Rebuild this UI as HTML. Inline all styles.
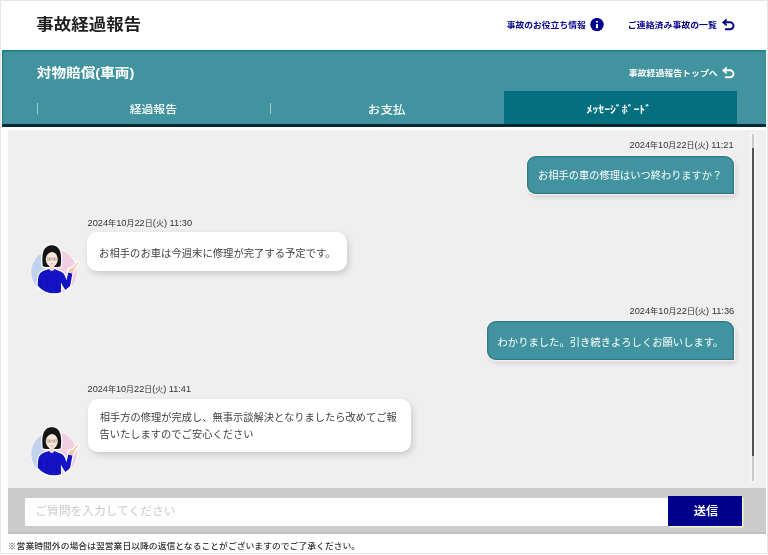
<!DOCTYPE html><html lang="ja"><head><meta charset="utf-8"><title>事故経過報告</title><style>
html,body{margin:0;padding:0}
body{width:768px;height:555px;position:relative;overflow:hidden;background:#fff;font-family:"Liberation Sans","Noto Sans CJK JP",sans-serif}
.frame{position:absolute;left:0;top:0;width:765.6px;height:552.3px;border:1.2px solid #e6e6e6;border-bottom-width:1.5px;pointer-events:none}
.t{position:absolute;overflow:hidden;white-space:nowrap;line-height:1}
.t svg{position:absolute;left:0;top:0;display:block;filter:blur(.4px)}
.t svg text{font-family:"Liberation Sans","Noto Sans CJK JP",sans-serif}
.ic{position:absolute;display:block}
.hdr,.sub,.chat,.bar{position:absolute;left:0;top:0;width:0;height:0}
.sub:before{content:"";position:absolute;left:1.7px;top:50.3px;width:764.3px;height:74px;background:#41949f;box-shadow:inset 0 1.6px 1.4px #1c7a8a,inset 1px 0 1px #1c7a8a}
.sub:after{content:"";position:absolute;left:2px;top:124.2px;width:764px;height:3px;background:linear-gradient(#07303b,#03212b 55%,#0c3641)}
.tabon{position:absolute;left:503.6px;top:91.2px;width:233.2px;height:33px;background:#04707f}
.sep{position:absolute;top:103.3px;width:1px;height:11px;background:#a4cbd0}
.chat:before{content:"";position:absolute;left:8px;top:129.8px;width:758px;height:358.2px;background:#efefef}
.bub{position:absolute;box-sizing:border-box}
.bub.me{background:#41949f;border-radius:9px 9px 0 9px;box-shadow:inset 0 0 0 1.3px rgba(0,85,100,.38),0 0 0 1.4px rgba(255,240,234,.85),2px 3px 5px rgba(0,0,0,.15)}
.bub.op{background:#fff;border-radius:10px;box-shadow:2px 3px 6px rgba(0,0,0,.15)}
.sbt{position:absolute;left:751.6px;top:133.5px;width:2.8px;height:347.5px;background:#c9c9c9;box-shadow:0 0 0 1.8px rgba(255,255,255,.45)}
.sbh{position:absolute;left:751.6px;top:148px;width:2.8px;height:308px;background:#555}
.bar:before{content:"";position:absolute;left:8px;top:488px;width:758px;height:46px;background:linear-gradient(#cbcbcb 44px,#bfbfbf 44px)}
.inp{position:absolute;left:24.8px;top:497.8px;width:644px;height:28.3px;background:#fff}
.btn{position:absolute;left:668.4px;top:495.8px;width:73.8px;height:30.2px;background:#00008b;box-shadow:1.5px 1.5px 0 #f6f1cf}
.av{position:absolute;width:54px;height:56px}
.av svg{display:block;filter:blur(.35px)}
</style></head><body><div class="frame"></div><div class="hdr"><div class="t " style="left:34.00px;top:13.86px;width:109.30px;height:20.79px;font-size:15.9px"><svg width="109.30" height="20.79" viewBox="0 0 109.30 20.79" fill="#1f1f1f"><text x="2.34" y="16.44" font-size="15.9" font-weight="bold" textLength="104.94" lengthAdjust="spacingAndGlyphs">事故経過報告</text></svg></div><a class="lnk"><div class="t " style="left:503.60px;top:17.82px;width:84.60px;height:13.50px;font-size:8.1px"><svg width="84.60" height="13.50" viewBox="0 0 84.60 13.50" fill="#00008b"><text x="2.67" y="9.81" font-size="8.06" font-weight="bold" textLength="79.1" lengthAdjust="spacingAndGlyphs">事故のお役立ち情報</text></svg></div><svg class="ic" style="left:590px;top:18px" width="14" height="14" viewBox="0 0 14 14"><circle cx="7" cy="6.6" r="6.7" fill="#00008b"/><circle cx="7" cy="3.7" r="1" fill="#fff"/><rect x="5.95" y="6.1" width="2.1" height="4.2" fill="#fff"/></svg></a><a class="lnk"><div class="t " style="left:626.10px;top:17.77px;width:93.70px;height:13.60px;font-size:8.2px"><svg width="93.70" height="13.60" viewBox="0 0 93.70 13.60" fill="#00008b"><text x="1.85" y="9.91" font-size="8.18" font-weight="bold" textLength="89.1" lengthAdjust="spacingAndGlyphs">ご連絡済み事故の一覧</text></svg></div><svg class="ic" style="left:721.0px;top:17.0px" width="15" height="14" viewBox="0 0 15 14"><path d="M1 5.4L5.5 1.5L5.9 3.3L4.4 5.4L5.9 7.5L5.5 9.3Z" fill="#00008b"/><path d="M5 5.3H9A3.5 3.5 0 0 1 9 12.3H4.8" fill="none" stroke="#00008b" stroke-width="1.9" stroke-linecap="round"/></svg></a></div><div class="sub"><div class="t " style="left:34.00px;top:62.73px;width:102.60px;height:18.05px;font-size:13.0px"><svg width="102.60" height="18.05" viewBox="0 0 102.60 18.05" fill="#fff"><text x="2.74" y="13.95" font-size="12.96" font-weight="bold" textLength="97.6" lengthAdjust="spacingAndGlyphs">対物賠償(車両)</text></svg></div><div class="t " style="left:625.50px;top:65.70px;width:94.50px;height:13.61px;font-size:8.2px"><svg width="94.50" height="13.61" viewBox="0 0 94.50 13.61" fill="#fff"><text x="2.66" y="9.91" font-size="8.18" font-weight="bold" textLength="89.1" lengthAdjust="spacingAndGlyphs">事故経過報告トップへ</text></svg></div><svg class="ic" style="left:721.0px;top:64.8px" width="15" height="14" viewBox="0 0 15 14"><path d="M1 5.4L5.5 1.5L5.9 3.3L4.4 5.4L5.9 7.5L5.5 9.3Z" fill="#fff"/><path d="M5 5.3H9A3.5 3.5 0 0 1 9 12.3H4.8" fill="none" stroke="#fff" stroke-width="1.9" stroke-linecap="round"/></svg><div class="sep" style="left:37px"></div><div class="sep" style="left:270px"></div><div class="tabon"></div><div class="t " style="left:127.15px;top:100.95px;width:52.30px;height:15.89px;font-size:10.6px"><svg width="52.30" height="15.89" viewBox="0 0 52.30 15.89" fill="#fff"><text x="2.75" y="11.99" font-size="10.64" font-weight="500" textLength="47.24" lengthAdjust="spacingAndGlyphs">経過報告</text></svg></div><div class="t " style="left:366.05px;top:100.62px;width:42.30px;height:16.56px;font-size:11.4px"><svg width="42.30" height="16.56" viewBox="0 0 42.30 16.56" fill="#fff"><text x="1.82" y="12.59" font-size="11.35" font-weight="500" textLength="37.8" lengthAdjust="spacingAndGlyphs">お支払</text></svg></div><div class="t " style="left:584.30px;top:101.22px;width:69.50px;height:15.77px;font-size:10.6px"><svg width="69.50" height="15.77" viewBox="0 0 69.50 15.77" fill="#fff"><text x="2.60" y="12.09" font-size="10.58" font-weight="bold" textLength="64.4" lengthAdjust="spacingAndGlyphs">ﾒｯｾｰｼﾞﾎﾞｰﾄﾞ</text></svg></div></div><div class="chat"><div class="sbt"></div><div class="sbh"></div><div class="t " style="left:627.25px;top:138.36px;width:109.90px;height:14.67px;font-size:8.0px"><svg width="109.90" height="14.67" viewBox="0 0 109.90 14.67" fill="#333"><text x="2.54" y="9.76" font-size="9.22">2024<tspan font-size="8.01">年</tspan>10<tspan font-size="8.01">月</tspan>22<tspan font-size="8.01">日</tspan>(<tspan font-size="8.01">火</tspan>) 11:21</text></svg></div><div class="bub me" style="left:527.2px;top:155.6px;width:207.2px;height:38.4px"></div><div class="t " style="left:536.20px;top:166.88px;width:187.00px;height:15.54px;font-size:10.3px"><svg width="187.00" height="15.54" viewBox="0 0 187.00 15.54" fill="#fff"><text x="2.04" y="11.66" font-size="10.25">お相手の車の修理はいつ終わりますか？</text></svg></div><div class="t " style="left:84.80px;top:215.95px;width:110.40px;height:14.71px;font-size:8.0px"><svg width="110.40" height="14.71" viewBox="0 0 110.40 14.71" fill="#333"><text x="2.53" y="9.79" font-size="9.26">2024<tspan font-size="8.04">年</tspan>10<tspan font-size="8.04">月</tspan>22<tspan font-size="8.04">日</tspan>(<tspan font-size="8.04">火</tspan>) 11:30</text></svg></div><div class="bub op" style="left:87.3px;top:232.2px;width:259.8px;height:39.3px"></div><div class="t " style="left:96.90px;top:244.56px;width:235.00px;height:15.38px;font-size:10.1px"><svg width="235.00" height="15.38" viewBox="0 0 235.00 15.38" fill="#404040"><text x="2.03" y="11.52" font-size="10.09" textLength="236.7" lengthAdjust="spacingAndGlyphs">お相手のお車は今週末に修理が完了する予定です。</text></svg></div><div class="av" style="left:28px;top:242px"><svg width="54" height="56" viewBox="0 0 54 56"><defs><linearGradient id="avgbg" x1="0" x2="1" y1="0" y2="0"><stop offset="0.3" stop-color="#c1d2f1"/><stop offset="0.62" stop-color="#f1cfe2"/></linearGradient><clipPath id="avgcp"><path d="M0 0H54V30H47.3A21.3 21.3 0 0 1 4.7 30H0Z"/></clipPath><clipPath id="avgcq"><path d="M0 0H54V30H48.7A22.7 22.7 0 0 1 3.3 30H0Z"/></clipPath><path id="avgp1" d="M14.8 24.2C13.4 14 14.4 3.3 23.8 3.3C33.2 3.3 34 14 32.6 24.2C30.5 25.4 17 25.4 14.8 24.2Z"/><path id="avgp2" d="M21.4 22H26.2V29.5H21.4Z"/><path id="avgp3" d="M21.2 27C16.5 28 12.4 29.6 10.8 33.6C9.4 37.5 9.6 46 10.2 56H33.2V41.5L37 47.6C38.6 49.6 41.4 48.6 41.7 46.4L44.4 31.6L40.3 30.4L38.4 38.6C37.6 34.6 36.4 31.2 33.2 29.8C30.5 28.6 28 27.6 26.4 27C25.4 29.6 22.2 29.6 21.2 27Z"/><path id="avgp4" d="M40.5 30.5C40 28.6 40.8 26.8 42.6 26.2C43.6 25.8 44.6 25.6 45.4 25L49.3 20.4C50 19.8 50.8 20.5 50.3 21.3L46.6 26.4C46.2 28.6 45.4 30.6 44.3 31.6Z"/><g id="avgo"><use href="#avgp1"/><use href="#avgp2"/><use href="#avgp3"/><use href="#avgp4"/></g></defs><circle cx="26" cy="30" r="23.7" fill="#f8f4f4"/><circle cx="26" cy="30" r="22.8" fill="url(#avgbg)"/><g clip-path="url(#avgcq)"><use href="#avgo" fill="#fff" stroke="#fff" stroke-width="2.4" stroke-linejoin="round"/></g><g clip-path="url(#avgcp)"><use href="#avgp1" fill="#161616"/><use href="#avgp2" fill="#f1d8c6"/><use href="#avgp3" fill="#1414c6"/><use href="#avgp4" fill="#f0c9ae"/><ellipse cx="23.8" cy="17.3" rx="6" ry="7.4" fill="#f7e6d8"/><path d="M17.6 14.6C17.4 8.8 20.6 6.4 24 6.4C27.6 6.4 30.2 9 30 15.4C29.2 12.6 27.8 10.6 26 9.6C23.8 9 20 11 17.6 14.6Z" fill="#161616"/><path d="M19.3 15.8h3.6v2.5h-3.6zM24.7 15.8h3.6v2.5h-3.6zM22.9 16.8h1.8" fill="none" stroke="#6a5a50" stroke-width=".35" opacity=".8"/><circle cx="21.2" cy="17" r=".55" fill="#2a2020"/><circle cx="26.4" cy="17" r=".55" fill="#2a2020"/><path d="M22.8 21.6Q23.8 22.5 24.9 21.6" stroke="#c46a6a" stroke-width=".8" fill="none"/><path d="M33.4 41.5L33.7 52" stroke="#fff" stroke-width=".9"/><path d="M18.5 35C20 41 19 47 17.5 52M27.5 33C29 38 28 44 28.5 51M12 38C13 42 12.5 46 12.5 49" stroke="#0a0a9c" stroke-width=".9" fill="none" opacity=".55"/></g></svg>
</div><div class="t " style="left:627.25px;top:304.44px;width:110.60px;height:14.73px;font-size:8.1px"><svg width="110.60" height="14.73" viewBox="0 0 110.60 14.73" fill="#333"><text x="2.53" y="9.81" font-size="9.28">2024<tspan font-size="8.06">年</tspan>10<tspan font-size="8.06">月</tspan>22<tspan font-size="8.06">日</tspan>(<tspan font-size="8.06">火</tspan>) 11:36</text></svg></div><div class="bub me" style="left:486.7px;top:321.4px;width:247.6px;height:38.8px"></div><div class="t " style="left:494.80px;top:333.74px;width:226.10px;height:15.62px;font-size:10.3px"><svg width="226.10" height="15.62" viewBox="0 0 226.10 15.62" fill="#fff"><text x="2.49" y="11.73" font-size="10.33">わかりました。引き続きよろしくお願いします。</text></svg></div><div class="t " style="left:84.80px;top:381.99px;width:109.40px;height:14.63px;font-size:8.0px"><svg width="109.40" height="14.63" viewBox="0 0 109.40 14.63" fill="#333"><text x="2.54" y="9.73" font-size="9.18">2024<tspan font-size="7.97">年</tspan>10<tspan font-size="7.97">月</tspan>22<tspan font-size="7.97">日</tspan>(<tspan font-size="7.97">火</tspan>) 11:41</text></svg></div><div class="bub op" style="left:87.8px;top:398.8px;width:323.2px;height:53.6px"></div><div class="t " style="left:97.00px;top:410.13px;width:302.40px;height:15.33px;font-size:10.0px"><svg width="302.40" height="15.33" viewBox="0 0 302.40 15.33" fill="#404040"><text x="2.74" y="11.48" font-size="10.04" textLength="296.96" lengthAdjust="spacingAndGlyphs">相手方の修理が完成し、無事示談解決となりましたら改めてご報</text></svg></div><div class="t " style="left:97.30px;top:426.37px;width:158.80px;height:15.37px;font-size:10.1px"><svg width="158.80" height="15.37" viewBox="0 0 158.80 15.37" fill="#404040"><text x="2.38" y="11.51" font-size="10.07" textLength="154.2" lengthAdjust="spacingAndGlyphs">告いたしますのでご安心ください</text></svg></div><div class="av" style="left:28px;top:423.5px"><svg width="54" height="56" viewBox="0 0 54 56"><defs><linearGradient id="avhbg" x1="0" x2="1" y1="0" y2="0"><stop offset="0.3" stop-color="#c1d2f1"/><stop offset="0.62" stop-color="#f1cfe2"/></linearGradient><clipPath id="avhcp"><path d="M0 0H54V30H47.3A21.3 21.3 0 0 1 4.7 30H0Z"/></clipPath><clipPath id="avhcq"><path d="M0 0H54V30H48.7A22.7 22.7 0 0 1 3.3 30H0Z"/></clipPath><path id="avhp1" d="M14.8 24.2C13.4 14 14.4 3.3 23.8 3.3C33.2 3.3 34 14 32.6 24.2C30.5 25.4 17 25.4 14.8 24.2Z"/><path id="avhp2" d="M21.4 22H26.2V29.5H21.4Z"/><path id="avhp3" d="M21.2 27C16.5 28 12.4 29.6 10.8 33.6C9.4 37.5 9.6 46 10.2 56H33.2V41.5L37 47.6C38.6 49.6 41.4 48.6 41.7 46.4L44.4 31.6L40.3 30.4L38.4 38.6C37.6 34.6 36.4 31.2 33.2 29.8C30.5 28.6 28 27.6 26.4 27C25.4 29.6 22.2 29.6 21.2 27Z"/><path id="avhp4" d="M40.5 30.5C40 28.6 40.8 26.8 42.6 26.2C43.6 25.8 44.6 25.6 45.4 25L49.3 20.4C50 19.8 50.8 20.5 50.3 21.3L46.6 26.4C46.2 28.6 45.4 30.6 44.3 31.6Z"/><g id="avho"><use href="#avhp1"/><use href="#avhp2"/><use href="#avhp3"/><use href="#avhp4"/></g></defs><circle cx="26" cy="30" r="23.7" fill="#f8f4f4"/><circle cx="26" cy="30" r="22.8" fill="url(#avhbg)"/><g clip-path="url(#avhcq)"><use href="#avho" fill="#fff" stroke="#fff" stroke-width="2.4" stroke-linejoin="round"/></g><g clip-path="url(#avhcp)"><use href="#avhp1" fill="#161616"/><use href="#avhp2" fill="#f1d8c6"/><use href="#avhp3" fill="#1414c6"/><use href="#avhp4" fill="#f0c9ae"/><ellipse cx="23.8" cy="17.3" rx="6" ry="7.4" fill="#f7e6d8"/><path d="M17.6 14.6C17.4 8.8 20.6 6.4 24 6.4C27.6 6.4 30.2 9 30 15.4C29.2 12.6 27.8 10.6 26 9.6C23.8 9 20 11 17.6 14.6Z" fill="#161616"/><path d="M19.3 15.8h3.6v2.5h-3.6zM24.7 15.8h3.6v2.5h-3.6zM22.9 16.8h1.8" fill="none" stroke="#6a5a50" stroke-width=".35" opacity=".8"/><circle cx="21.2" cy="17" r=".55" fill="#2a2020"/><circle cx="26.4" cy="17" r=".55" fill="#2a2020"/><path d="M22.8 21.6Q23.8 22.5 24.9 21.6" stroke="#c46a6a" stroke-width=".8" fill="none"/><path d="M33.4 41.5L33.7 52" stroke="#fff" stroke-width=".9"/><path d="M18.5 35C20 41 19 47 17.5 52M27.5 33C29 38 28 44 28.5 51M12 38C13 42 12.5 46 12.5 49" stroke="#0a0a9c" stroke-width=".9" fill="none" opacity=".55"/></g></svg>
</div></div><div class="bar"><div class="inp"></div><div class="btn"></div><div class="t " style="left:34.30px;top:502.47px;width:144.50px;height:17.06px;font-size:11.8px"><svg width="144.50" height="17.06" viewBox="0 0 144.50 17.06" fill="#cacaca"><text x="1.31" y="13.01" font-size="11.75">ご質問を入力してください</text></svg></div><div class="t " style="left:690.60px;top:502.59px;width:29.80px;height:16.23px;font-size:11.0px"><svg width="29.80" height="16.23" viewBox="0 0 29.80 16.23" fill="#fff"><text x="2.73" y="12.29" font-size="11" font-weight="bold" textLength="24.42" lengthAdjust="spacingAndGlyphs">送信</text></svg></div></div><div class="t " style="left:5.60px;top:539.16px;width:351.50px;height:14.08px;font-size:8.5px"><svg width="351.50" height="14.08" viewBox="0 0 351.50 14.08" fill="#333"><text x="1.77" y="10.34" font-size="8.47" font-weight="500" textLength="352.4" lengthAdjust="spacingAndGlyphs">※営業時間外の場合は翌営業日以降の返信となることがございますのでご了承ください。</text></svg></div></body></html>
